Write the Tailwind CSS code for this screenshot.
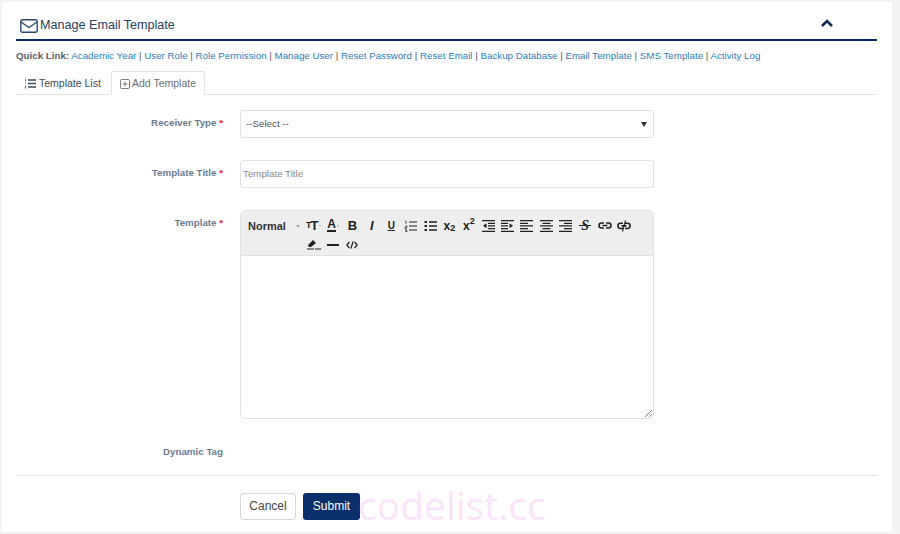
<!DOCTYPE html>
<html lang="en">
<head>
    <meta charset="UTF-8">
    <title>Manage Email Template</title>
    <script src="https://cdn.jsdelivr.net/npm/@tailwindcss/browser@4"></script>
</head>
<body class="bg-[#f3f3f3] font-['Liberation_Sans',Arial,sans-serif] h-[534px] w-[900px] overflow-hidden">
    <!-- Panel -->
    <div class="relative ml-[2px] mt-[2px] h-[530px] w-[890px] bg-white pl-[14px] pr-[15px]">
        <!-- Header -->
        <div class="flex h-[39px] items-center border-b-2 border-[#0b2a68] pt-[10px] pl-[4px] pr-[44px]">
            <svg class="h-[14px] w-[18px] text-[#2c4a6e]" viewBox="0 0 18 14" fill="none" stroke="currentColor" stroke-width="1.4"><rect x="0.8" y="0.8" width="16.4" height="12.4" rx="1.6"/><path d="M1 3l8 5.5L17 3"/></svg>
            <span class="ml-[2px] text-[12.6px] text-[#26405f]">Manage Email Template</span>
            <svg class="ml-auto mb-[6px] h-[8px] w-[12px] text-[#0e2a52]" viewBox="0 0 12 8" fill="none" stroke="currentColor" stroke-width="2.6"><path d="M1 7l5-5 5 5"/></svg>
        </div>

        <!-- Quick links -->
        <div class="mt-[8px] h-[14px] text-[9.75px] leading-[14px] text-[#555]">
            <b class="text-[#5a6068]">Quick Link:</b>
            <a class="text-[#2b80c0]">Academic Year</a> |
            <a class="text-[#2b80c0]">User Role</a> |
            <a class="text-[#2b80c0]">Role Permission</a> |
            <a class="text-[#2b80c0]">Manage User</a> |
            <a class="text-[#2b80c0]">Reset Password</a> |
            <a class="text-[#2b80c0]">Reset Email</a> |
            <a class="text-[#2b80c0]">Backup Database</a> |
            <a class="text-[#2b80c0]">Email Template</a> |
            <a class="text-[#2b80c0]">SMS Template</a> |
            <a class="text-[#2b80c0]">Activity Log</a>
        </div>

        <!-- Tabs -->
        <div class="mt-[8px] flex h-[24px] items-stretch border-b border-[#e4e4e4] text-[10.5px]">
            <div class="flex w-[95px] items-center pl-[8px] pt-[2px] text-[#3f4a58]">
                <svg class="mr-[3px] h-[11px] w-[12px]" viewBox="0 0 12 11" fill="none" stroke="currentColor"><path d="M1.5 1v2M1 5h1M1 8h1l-1 2h1" stroke-width="0.8"/><path d="M4 2h8M4 5.5h8M4 9h8" stroke-width="1.5"/></svg>
                <span>Template List</span>
            </div>
            <div class="-mb-px flex w-[94px] items-center rounded-t-[3px] border border-b-white border-[#e4e4e4] bg-white pl-[8px] pt-[1px] text-[#6a6f76]">
                <svg class="mr-[2px] h-[10px] w-[10px]" viewBox="0 0 10 10" fill="none" stroke="currentColor" stroke-width="0.9"><rect x="0.5" y="0.5" width="9" height="9" rx="1.2"/><path d="M5 2.5v5M2.5 5h5"/></svg>
                <span>Add Template</span>
            </div>
        </div>

        <!-- Form -->
        <div class="mt-[15px] grid grid-cols-[207px_414px] gap-x-[17px] text-[9.75px]">
            <div class="pt-[6px] text-right font-bold text-[#6c7a90]">Receiver Type <span class="text-[#d9243c]">*</span></div>
            <div class="flex h-[28px] items-center justify-between rounded-[3px] border border-[#e2e2e2] pl-[5px] pr-[6px] text-[#555]">
                <span>--Select --</span>
                <span class="h-0 w-0 border-x-[3px] border-t-[5px] border-x-transparent border-t-[#333]"></span>
            </div>

            <div class="mt-[22px] pt-[6px] text-right font-bold text-[#6c7a90]">Template Title <span class="text-[#d9243c]">*</span></div>
            <div class="mt-[22px] flex h-[28px] items-center rounded-[3px] border border-[#e2e2e2] pl-[2px] pt-[1px] text-[#8a8a8a]">Template Title</div>

            <div class="mt-[22px] pt-[6px] text-right font-bold text-[#6c7a90]">Template <span class="text-[#d9243c]">*</span></div>
            <div class="relative mt-[22px] h-[209px] overflow-hidden rounded-[5px] border border-[#e2e2e2]">
                <!-- Toolbar -->
                <div class="flex h-[45px] items-start border-b border-[#e2e2e2] bg-[#eeeeee] text-[#222]">
                    <div class="flex h-[30px] w-[63px] items-center pl-[7px] pt-[1px]">
                        <span class="text-[11px] font-bold text-[#333]">Normal</span>
                        <span class="ml-[10px] h-0 w-0 border-x-[2px] border-t-[3px] border-x-transparent border-t-[#aaa]"></span>
                    </div>
                    <div class="mt-[5px] flex w-[335px] flex-wrap">
                        <div class="flex h-[19px] w-[19.4px] items-center justify-center font-bold"><span class="text-[9px]">T</span><span class="-ml-[1px] text-[13px]">T</span><span class="ml-[1px] h-0 w-0 border-x-[1.5px] border-t-[2px] border-x-transparent border-t-[#aaa]"></span></div>
                        <div class="flex h-[19px] w-[19.4px] items-center justify-center"><span class="border-b-2 border-[#222] text-[12px] font-bold leading-[11px]">A</span><span class="ml-[1px] h-0 w-0 border-x-[1.5px] border-t-[2px] border-x-transparent border-t-[#aaa]"></span></div>
                        <div class="flex h-[19px] w-[19.4px] items-center justify-center text-[13px] font-bold">B</div>
                        <div class="flex h-[19px] w-[19.4px] items-center justify-center text-[13px] font-bold italic">I</div>
                        <div class="flex h-[19px] w-[19.4px] items-center justify-center text-[10px] font-bold underline">U</div>
                        <div class="flex h-[19px] w-[19.4px] items-center justify-center"><svg class="h-[12px] w-[13px]" viewBox="0 0 13 12" fill="none" stroke="currentColor"><path d="M1 1h1v3M1 6h2v1.5H1V9h2M1 10h2v1.5H1" stroke-width="0.7"/><path d="M5 2h8M5 6h8M5 10h8" stroke-width="1"/></svg></div>
                        <div class="flex h-[19px] w-[19.4px] items-center justify-center"><svg class="h-[12px] w-[13px]" viewBox="0 0 13 12" fill="none" stroke="currentColor"><path d="M0.5 2h2.5M0.5 6h2.5M0.5 10h2.5" stroke-width="2.2"/><path d="M5 2h8M5 6h8M5 10h8" stroke-width="1.3"/></svg></div>
                        <div class="flex h-[19px] w-[19.4px] items-center justify-center text-[12px] font-bold">x<sub class="text-[9px]">2</sub></div>
                        <div class="flex h-[19px] w-[19.4px] items-center justify-center text-[12px] font-bold">x<sup class="text-[9px]">2</sup></div>
                        <div class="flex h-[19px] w-[19.4px] items-center justify-center"><svg class="h-[12px] w-[13px]" viewBox="0 0 13 12" fill="currentColor"><path d="M0 0h13v1.3H0zM6 2.7h7V4H6zM6 5.3h7v1.3H6zM6 8h7v1.3H6zM0 10.7h13V12H0zM4.5 3.2v5L1 5.7z"/></svg></div>
                        <div class="flex h-[19px] w-[19.4px] items-center justify-center"><svg class="h-[12px] w-[13px]" viewBox="0 0 13 12" fill="currentColor"><path d="M0 0h13v1.3H0zM0 2.7h7V4H0zM0 5.3h7v1.3H0zM0 8h7v1.3H0zM0 10.7h13V12H0zM8.5 3.2v5L12 5.7z"/></svg></div>
                        <div class="flex h-[19px] w-[19.4px] items-center justify-center"><svg class="h-[12px] w-[13px]" viewBox="0 0 13 12" fill="currentColor"><path d="M0 0h13v1.3H0zM0 2.7h8V4H0zM0 5.3h13v1.3H0zM0 8h8v1.3H0zM0 10.7h13V12H0z"/></svg></div>
                        <div class="flex h-[19px] w-[19.4px] items-center justify-center"><svg class="h-[12px] w-[13px]" viewBox="0 0 13 12" fill="currentColor"><path d="M0 0h13v1.3H0zM2.5 2.7h8V4h-8zM0 5.3h13v1.3H0zM2.5 8h8v1.3h-8zM0 10.7h13V12H0z"/></svg></div>
                        <div class="flex h-[19px] w-[19.4px] items-center justify-center"><svg class="h-[12px] w-[13px]" viewBox="0 0 13 12" fill="currentColor"><path d="M0 0h13v1.3H0zM5 2.7h8V4H5zM0 5.3h13v1.3H0zM5 8h8v1.3H5zM0 10.7h13V12H0z"/></svg></div>
                        <div class="relative flex h-[19px] w-[19.4px] items-center justify-center font-['Liberation_Serif',serif] text-[14px] font-bold italic">S<span class="absolute left-[4px] right-[4px] top-[9px] h-px bg-[#222]"></span></div>
                        <div class="flex h-[19px] w-[19.4px] items-center justify-center"><svg class="h-[7px] w-[14px]" viewBox="0 0 14 7" fill="none" stroke="currentColor" stroke-width="1.6"><path d="M6 1H3.5a2.5 2.5 0 0 0 0 5H6M8 1h2.5a2.5 2.5 0 0 1 0 5H8M4.5 3.5h5"/></svg></div>
                        <div class="flex h-[19px] w-[19.4px] items-center justify-center"><svg class="h-[12px] w-[14px]" viewBox="0 0 14 12" fill="none" stroke="currentColor" stroke-width="1.6"><path d="M6 3.2H3.5a2.5 2.5 0 0 0 0 5.3H6M8 3.2h2.5a2.5 2.5 0 0 1 0 5.3H8M4.5 5.85h5"/><path d="M8.5 0.5L5.5 11.5" stroke-width="1.1"/></svg></div>
                        <div class="flex h-[19px] w-[19.4px] items-center justify-center"><svg class="h-[11px] w-[14px]" viewBox="0 0 14 11" fill="currentColor"><path d="M1 6l5-5 3 3-5 4H2zM8 9.5h6v1H8z"/><path d="M0 9.5h7v1H0z"/></svg></div>
                        <div class="flex h-[19px] w-[19.4px] items-center justify-center"><span class="h-[2px] w-[12px] bg-[#222]"></span></div>
                        <div class="flex h-[19px] w-[19.4px] items-center justify-center"><svg class="h-[8px] w-[12px]" viewBox="0 0 12 8" fill="none" stroke="currentColor" stroke-width="1.2"><path d="M3.5 1L0.8 4l2.7 3M8.5 1l2.7 3-2.7 3M7 0.5L5 7.5"/></svg></div>
                    </div>
                </div>
                <!-- Resize handle -->
                <svg class="absolute bottom-[1px] right-[1px] h-[8px] w-[8px] text-[#777]" viewBox="0 0 8 8" stroke="currentColor" stroke-width="0.9"><path d="M1 8l7-7M5 8l3-3"/></svg>
            </div>

            <div class="mt-[26px] text-right font-bold text-[#6c7a90]">Dynamic Tag</div>
            <div></div>
        </div>

        <!-- Footer -->
        <div class="mt-[15px] border-t border-[#e4e4e4] pl-[224px] pt-[17px]">
            <div class="flex gap-[7px] text-[12px]">
                <button class="h-[27px] w-[56px] rounded-[3px] border border-[#d8d8d8] bg-white text-[#444]">Cancel</button>
                <button class="h-[27px] w-[57px] rounded-[3px] bg-[#0b2f6b] text-white">Submit</button>
            </div>
        </div>

        <!-- Watermark -->
        <div class="absolute left-[356px] top-[481px] text-[39px] leading-[44px] text-[#fbe3fb] font-['Open_Sans',sans-serif]">codelist.cc</div>
    </div>
</body>
</html>
